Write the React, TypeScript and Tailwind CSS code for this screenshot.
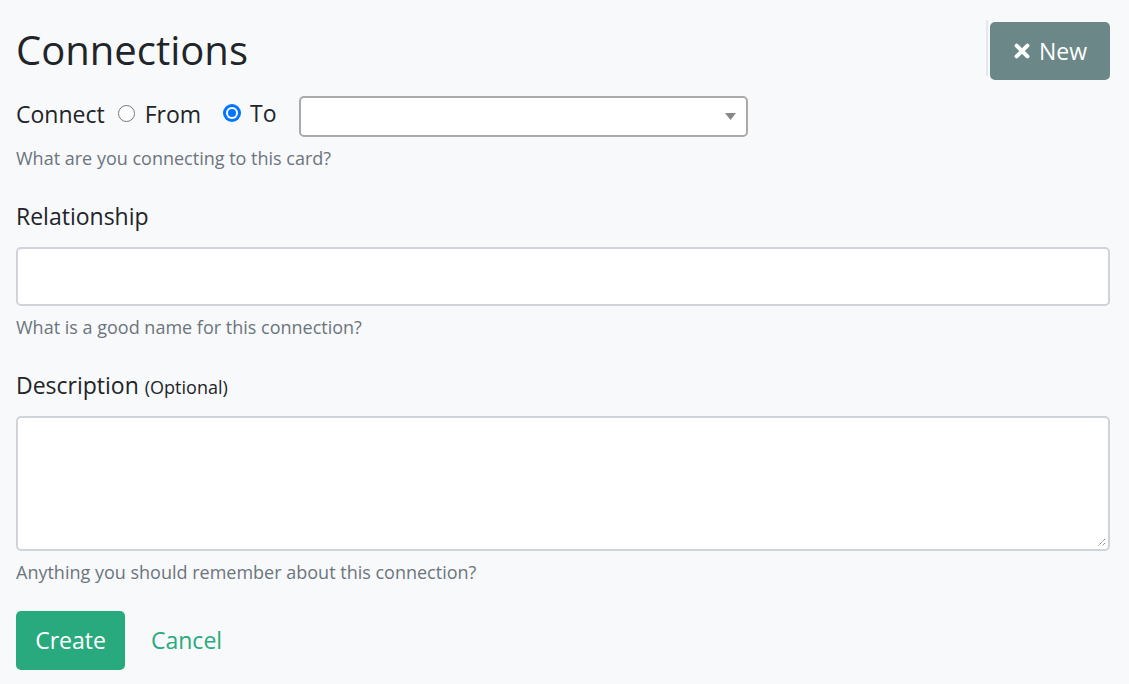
import React from 'react';

export default function App() {
  return (
    <div className="min-h-[684px] w-full bg-[#f8f9fa] text-[#212529] font-['Open_Sans','Noto_Sans',sans-serif]">
      <div className="pl-4 pr-[19px] pt-[26px]">
        {/* header row */}
        <div className="flex items-start justify-between h-[48px]">
          <h2 className="text-[40px] leading-[48px] font-normal">Connections</h2>
          <div className="flex -mt-[8px]">
            <div className="w-[2px] mt-[2px] h-[56px] bg-[#e5e7ea]" />
            <button className="ml-[2px] mt-[4px] h-[58px] w-[120px] rounded-[5px] bg-[#6c8787] text-white text-[23px] flex items-center justify-center gap-2">
              <svg width="18" height="18" viewBox="0 0 20 20" fill="none">
                <path d="M4 4 L16 16 M16 4 L4 16" stroke="white" strokeWidth="4.5" strokeLinecap="round" />
              </svg>
              New
            </button>
          </div>
        </div>

        {/* connect row */}
        <div className="mt-[22px] flex items-center text-[23px] leading-[30px]">
          <span className="mb-[6px]">Connect</span>
          <label className="ml-[13px] mb-[6px] flex items-center gap-[10px]">
            <span className="w-[17px] h-[17px] rounded-full border border-[#767676] bg-white" />
            <span>From</span>
          </label>
          <label className="ml-[22px] mb-[8px] flex items-center gap-[9px]">
            <span className="w-[18px] h-[18px] rounded-full bg-[#0075ff] flex items-center justify-center">
              <span className="w-[12px] h-[12px] rounded-full bg-white flex items-center justify-center">
                <span className="w-[8px] h-[8px] rounded-full bg-[#0075ff]" />
              </span>
            </span>
            <span>To</span>
          </label>
          <div className="ml-[22px] relative w-[449px] h-[41px] rounded-[5px] border-2 border-[#aaaaaa] bg-white">
            <svg className="absolute right-[10px] top-[15px]" width="11" height="8" viewBox="0 0 11 8">
              <path d="M0 0 H11 L5.5 7 Z" fill="#888888" />
            </svg>
          </div>
        </div>
        <p className="mt-[9px] text-[18px] leading-[24px] text-[#6c757d]">What are you connecting to this card?</p>

        {/* relationship */}
        <label className="block mt-[31px] text-[23px] leading-[30px]">Relationship</label>
        <div className="mt-[16px] h-[59px] rounded-[5px] border-2 border-[#d0d4da] bg-white" />
        <p className="mt-[9px] text-[18px] leading-[24px] text-[#6c757d]">What is a good name for this connection?</p>

        {/* description */}
        <label className="block mt-[31px] h-[30px] text-[23px] leading-[30px]">
          Description <span className="text-[18px] leading-none">(Optional)</span>
        </label>
        <div className="mt-[16px] relative h-[135px] rounded-[5px] border-2 border-[#d0d4da] bg-white">
          <svg className="absolute right-[2px] bottom-[2px]" width="12" height="12" viewBox="0 0 12 12">
            <path d="M11 4 L4 11 M11 8 L8 11" stroke="#555" strokeWidth="1" strokeDasharray="1 1" />
          </svg>
        </div>
        <p className="mt-[9px] text-[18px] leading-[24px] text-[#6c757d]">Anything you should remember about this connection?</p>

        {/* actions */}
        <div className="mt-[27px] flex items-center">
          <button className="h-[59px] w-[109px] rounded-[5px] bg-[#29aa7e] text-white text-[23px]">Create</button>
          <a className="ml-[26px] text-[23px] text-[#29aa7e]">Cancel</a>
        </div>
      </div>
    </div>
  );
}
